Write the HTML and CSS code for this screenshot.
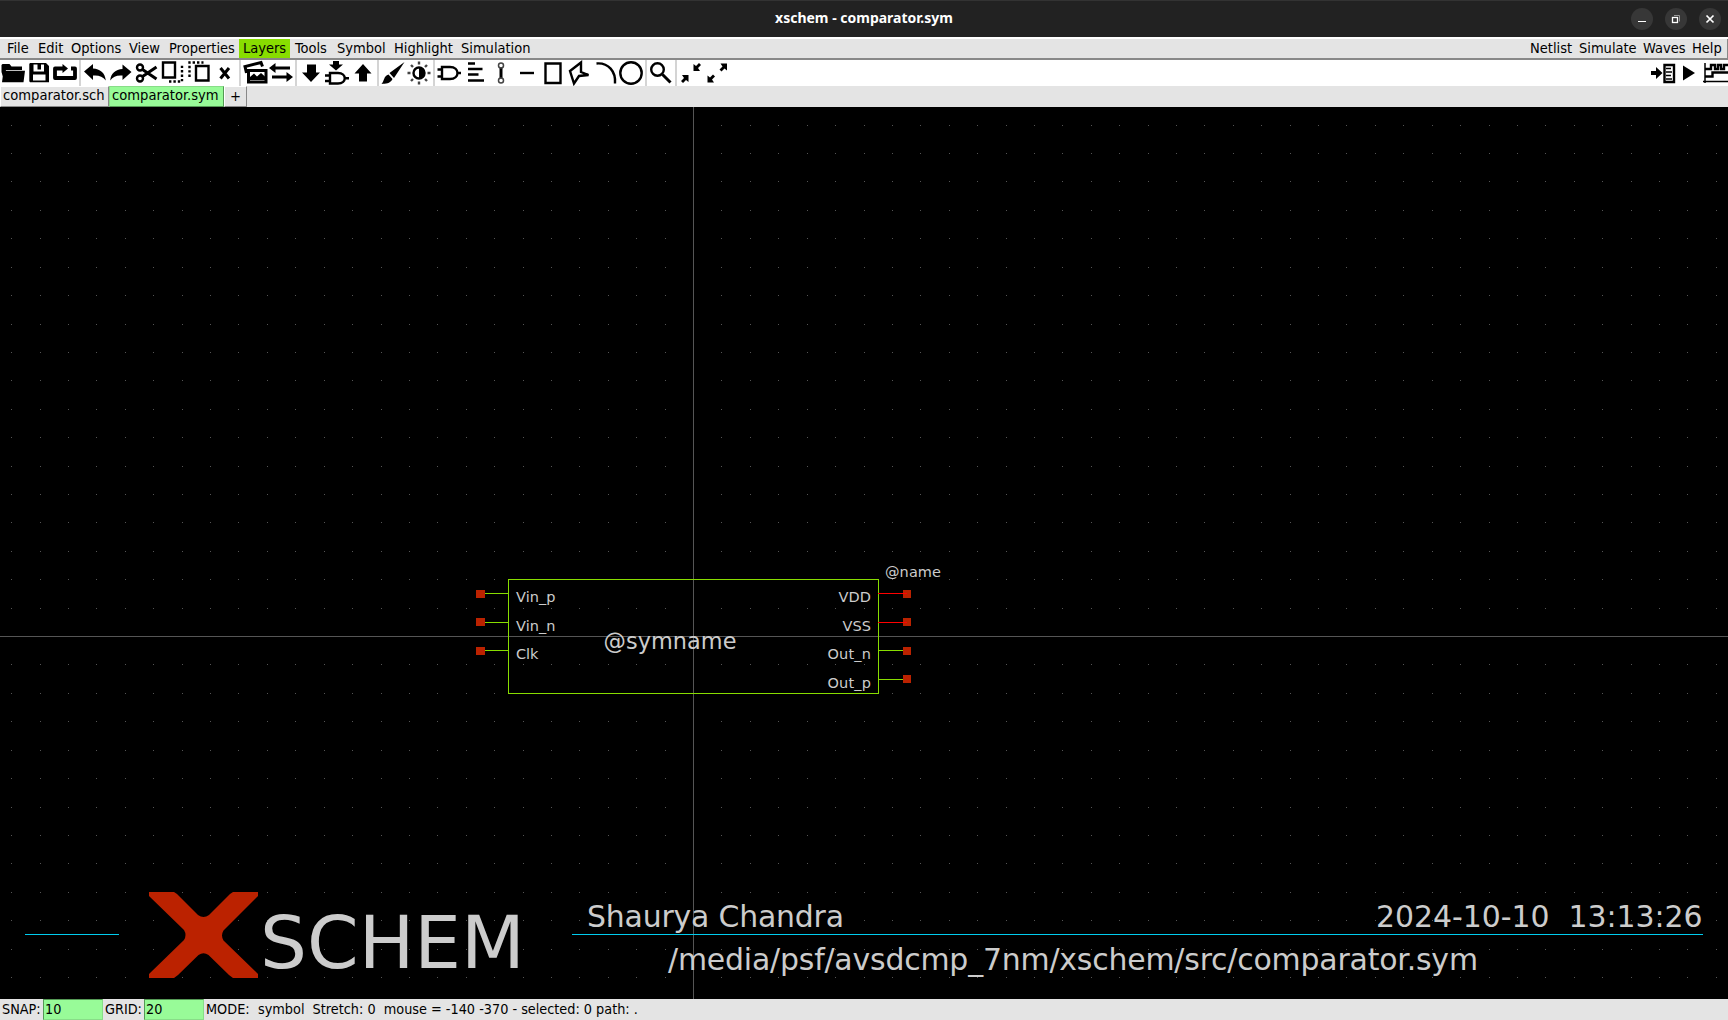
FILE: index.html
```html
<!DOCTYPE html>
<html lang="en">
<head>
<meta charset="utf-8">
<title>xschem - comparator.sym</title>
<link rel="stylesheet" href="styles.css">
</head>
<body>
<div class="window">
  <header class="titlebar">
    <div class="title">xschem - comparator.sym</div>
    <div class="controls">
      <span class="ctl"><svg viewBox="0 0 22 22"><path d="M7 13.500h8" stroke="#fff"/></svg></span>
      <span class="ctl"><svg viewBox="0 0 22 22"><path d="M9 7.500h5.500v6" stroke="#999"/><rect x="7.500" y="9.500" width="5" height="5" stroke="#fff" stroke-width="1.300"/></svg></span>
      <span class="ctl"><svg viewBox="0 0 22 22"><path d="M7.500 7.500l7 7m0-7l-7 7" stroke="#fff" stroke-width="1.700"/></svg></span>
    </div>
  </header>
  <nav class="menubar">
    <div class="menus">
      <span class="m1">File</span><span class="m2">Edit</span><span class="m3">Options</span><span class="m4">View</span><span class="m5">Properties</span><span class="m6 active">Layers</span><span class="m7">Tools</span><span class="m8">Symbol</span><span class="m9">Highlight</span><span>Simulation</span>
    </div>
    <div class="menus right"><span class="r1">Netlist</span><span class="r2">Simulate</span><span class="r3">Waves</span><span class="r4">Help</span></div>
  </nav>
  <div class="toolbar">
    <div class="group">
      <svg width="27" height="26" viewBox="0 0 27 26"><path class="f" d="M1.500 12V5l1-1h7l2 2.500H22V10H6l-2.500 9zM3.500 10.800h21.500L23.500 22.300H2z"/></svg>
      <svg width="24" height="26" viewBox="27 0 24 26"><path class="f" fill-rule="evenodd" d="M30 3h16l3 3v16.300H30l-.7-1V4zM33.500 4.500v7h10.500v-7h-3v5h-3.500v-5zM33 14.500v6h12.500v-6z"/></svg>
      <svg width="28" height="26" viewBox="51 0 28 26"><path class="s w4 round" d="M64 8.500h-9v9.500h20V8.500h-4"/><path class="f" d="M62.500 4l5.500 4.500-5.500 4.500z"/></svg>
    </div>
    <i class="sep"></i>
    <div class="group">
      <svg width="27" height="26" viewBox="81 0 27 26"><path class="f" d="M84 11.500l9-7.500v4.500c7 .5 12 4 12.800 12-3-4-7-5.500-12.800-5v4.500z"/></svg>
      <svg width="26" height="26" viewBox="108 0 26 26"><path class="f" d="M131.500 12l-9-7.500V9c-7 .5-11.500 4-12.300 11.500 3-4 6.500-5.500 12.300-5V20z"/></svg>
      <svg width="25" height="26" viewBox="134 0 25 26"><g class="s w2"><circle cx="140" cy="7.500" r="3"/><circle cx="140" cy="18.500" r="3"/></g><path class="s w3" d="M142.500 9.500l14 9.500M142.500 16.500l14-9.500"/></svg>
      <svg width="26" height="26" viewBox="159 0 26 26"><path class="s w2" d="M163 2.500h12v15h-12z"/><path class="s w2 dot" d="M169 21.500h13V5"/></svg>
      <svg width="27" height="26" viewBox="185 0 27 26"><path class="s w2 dot" d="M189.500 17V2.500h14"/><path class="s w2" d="M196 6h12.500v14.500H196z"/></svg>
      <svg width="27" height="26" viewBox="212 0 27 26"><path class="s w3" d="M220.500 8l8.500 10.500M229 8l-8.500 10.500"/></svg>
    </div>
    <i class="sep"></i>
    <div class="group">
      <svg width="27" height="26" viewBox="241 0 27 26"><path class="s w3" d="M248.500 10.500h17.500v11.500h-17.500z"/><path class="f" d="M250 20v-3l4-3.500 3 3 4-3.500 4.500 4v3z"/><path class="s w3" d="M246.500 13l-1.500-6.500 16-4 1.500 4"/></svg>
      <svg width="27" height="26" viewBox="268 0 27 26"><path class="s w3" d="M274 8h16M272 17h16"/><path class="f" d="M269 8l6.500-5v10zM293 17l-6.500-5v10z"/></svg>
    </div>
    <i class="sep"></i>
    <div class="group">
      <svg width="26" height="26" viewBox="297 0 26 26"><path class="f" d="M307 4.500h9v8h4L311 22l-9-9.500h5z"/></svg>
      <svg width="28" height="26" viewBox="323 0 28 26"><path class="f" d="M333 1h6v3.500h4l-7 6-7-6h4z"/><path class="s w2" d="M330 13h8c9 0 9 10.500 0 10.500h-8zM325 15.500h5M325 21h5M344.500 18.200h4.500"/></svg>
      <svg width="26" height="26" viewBox="351 0 26 26"><path class="f" d="M359 21.500h8v-8h4.500L363 4l-8.500 9.500h4.500z"/></svg>
    </div>
    <i class="sep"></i>
    <div class="group">
      <svg width="27" height="26" viewBox="379 0 27 26"><path class="f" d="M404.500 2L389.500 13l4.500 5zM388.500 14.500l4 4.500c-2.500 5-7 4.500-11 5 3-3 2-8 7-9.500z"/></svg>
      <svg width="27" height="26" viewBox="406 0 27 26"><circle class="s w2" cx="419" cy="13" r="5.500"/><path class="f" d="M419 7.500a5.500 5.500 0 0 1 0 11z"/><path class="s w2 soft" d="M419 1.500v3M419 21.500v3M407.500 13h3M427.500 13h3M411 5l2 2M425 19l2 2M427 5l-2 2M413 19l-2 2"/></svg>
    </div>
    <i class="sep"></i>
    <div class="group">
      <svg width="28" height="26" viewBox="435 0 28 26"><path class="s w2" d="M442 7h8c10 0 10 12 0 12h-8zM437.500 9.500h4M437.500 16.500h4M457 13h4"/></svg>
      <svg width="27" height="26" viewBox="463 0 27 26"><path class="s w2" d="M468 3.500h7M468 9h14.500M468 14.500h10.500M468 20.500h16"/></svg>
      <svg width="26" height="26" viewBox="490 0 26 26"><path class="s w3" d="M501 7.500v11"/><g class="s thin soft"><circle cx="501" cy="5.500" r="2.500"/><circle cx="501" cy="20.500" r="2.500"/></g></svg>
      <svg width="24" height="26" viewBox="516 0 24 26"><path class="s w2" d="M520 13h14"/></svg>
      <svg width="26" height="26" viewBox="540 0 26 26"><path class="s w2" d="M545.500 3.500h15V23h-15z"/></svg>
      <svg width="27" height="26" viewBox="566 0 27 26"><path class="s w2" d="M570 11l11-8.500v9.500l7.500 3-9.500 1-5 7.500z"/></svg>
      <svg width="25" height="26" viewBox="593 0 25 26"><path class="s w2" d="M596.500 3.500c12-1 19.500 8 18.500 20"/></svg>
      <svg width="27" height="26" viewBox="618 0 27 26"><circle class="s w2" cx="631" cy="13" r="10.700"/></svg>
    </div>
    <i class="sep"></i>
    <div class="group">
      <svg width="28" height="26" viewBox="647 0 28 26"><circle class="s w2" cx="657.500" cy="9.500" r="6.300"/><path class="s w3" d="M662.500 14.500l8 8"/></svg>
    </div>
    <i class="sep"></i>
    <div class="group">
      <svg width="28" height="26" viewBox="677 0 28 26"><path class="f" d="M688.500 15v7l-2.500-2-3 3-2-2 3-3-2-3zM693.500 11V4l2.500 2 3-3 2 2-3 3 2 3z"/></svg>
      <svg width="26" height="26" viewBox="705 0 26 26"><path class="f" d="M707.500 22.500v-7l2.500 2 3-3 2 2-3 3 2 3zM727 3.500v7L724.500 8.500l-3 3-2-2 3-3-2-3z"/></svg>
    </div>
    <div class="group end">
      <svg width="28" height="26" viewBox="1650 0 28 26"><path class="f" d="M1651 11h5V7l6.500 6-6.500 6v-4h-5z"/><path class="s w2" d="M1664.500 5h9.500v17h-9.500z"/><path class="s thin" d="M1666 8.500h5M1666 12h6M1666 15.500h5M1666 19h6"/></svg>
      <svg width="25" height="26" viewBox="1678 0 25 26"><path class="f" d="M1683 5.500l12 7.500-12 7.500z"/></svg>
      <svg width="25" height="26" viewBox="1703 0 25 26"><path class="s thin" d="M1705 3v20M1703 21.500h25"/><path class="s w2" d="M1705 9h6V5h4v4h3V5h3v4h3V5h4M1705 16.500h7.500v-4H1728"/></svg>
    </div>
  </div>
  <div class="tabs"><span class="tab t1">comparator.sch</span><span class="tab t2">comparator.sym</span><span class="tab t3">+</span></div>
  <main class="canvas">
    <svg width="1728" height="892" viewBox="0 107 1728 892">
      <g id="grid" fill="#555"></g>
      <path d="M693.500 107V999M0 636.500H1728" stroke="#555" fill="none"/>
      <g fill="none" stroke="#88dd00">
        <rect x="508.500" y="579.500" width="370" height="114"/>
        <path d="M480 593.500h28M480 622.500h28M480 650.500h28M879 650.500h28M879 679.500h28"/>
      </g>
      <g fill="#bb2200">
        <path d="M476 590h9v8h-9zM476 618h9v8h-9zM476 647h9v8h-9zM903 590h8v8h-8zM903 618h8v8h-8zM903 647h8v8h-8zM903 675h8v8h-8z"/>
        <path d="M149 892h25l3 2 21 21q5.500 4 11 0l21-21 3-2h25v4l-34.500 34.500q-3 5 0 10L258 974v4h-25l-4-3-20.500-20q-5-3.500-10 0L178 975l-4 3h-25v-4l35-34q3-5 0-10L149 896z"/>
      </g>
      <path d="M878 593.500h29M878 622.500h29" stroke="#f00"/>
      <path d="M25 934.500h94M572 934.500h1131" stroke="#00ccee"/>
      <g class="label">
        <text x="516" y="602" textLength="39.500">Vin_p</text>
        <text x="516" y="631" textLength="39.500">Vin_n</text>
        <text x="516" y="659" textLength="22.500">Clk</text>
        <text x="838.500" y="602" textLength="32.500">VDD</text>
        <text x="842.500" y="631" textLength="28.500">VSS</text>
        <text x="827.500" y="659" textLength="43.500">Out_n</text>
        <text x="827.500" y="688" textLength="43.500">Out_p</text>
        <text x="885" y="577" textLength="56">@name</text>
      </g>
      <text class="symname" x="603.500" y="649" textLength="133">@symname</text>
      <text class="brand" x="260" y="968" textLength="265" lengthAdjust="spacingAndGlyphs">SCHEM</text>
      <g class="info">
        <text x="587" y="927" textLength="257">Shaurya Chandra</text>
        <text x="668" y="970" textLength="810">/media/psf/avsdcmp_7nm/xschem/src/comparator.sym</text>
        <text x="1376" y="927" textLength="326.500" xml:space="preserve">2024-10-10  13:13:26</text>
      </g>
    </svg>
  </main>
  <footer class="status"><span class="snap">SNAP:</span><span class="field">10</span><span class="gridlbl">GRID:</span><span class="field">20</span><span class="mode">MODE:</span><span class="msg">symbol  Stretch: 0  mouse = -140 -370 - selected: 0 path: .</span></footer>
</div>
<script src="grid.js"></script>
</body>
</html>
```
FILE: styles.css
```css
* { box-sizing: border-box; }
body { margin: 0; background: #000; }
.window { width: 1728px; height: 1020px; display: flex; flex-direction: column; overflow: hidden; font: 14.5px/19px "DejaVu Sans Condensed", "DejaVu Sans", sans-serif; font-stretch: condensed; color: #000; }
.titlebar { height: 37px; background: #222; border-top: 1px solid #333; display: grid; grid-template-columns: 1fr auto 1fr; align-items: center; }
.title { grid-column: 2; color: #fff; font: bold 14px/20px "Noto Sans", "Open Sans", sans-serif; padding-bottom: 2px; }
.controls { display: flex; justify-content: flex-end; gap: 12px; padding-right: 7px; }
.ctl { width: 22px; height: 22px; border-radius: 50%; background: #373737; }
.ctl svg { display: block; fill: none; }
.menubar { height: 23px; background: #e4e4e4; border-top: 2px solid #fff; border-bottom: 2px solid #888; display: flex; justify-content: space-between; padding-left: 2px; }
.menus { display: flex; white-space: nowrap; }
.menus span { padding-left: 4px; line-height: 18px; height: 19px; }
.menus .m1 { width: 32px; padding-left: 5px; }
.m2 { width: 33px; }
.m3 { width: 58px; }
.m4 { width: 40px; }
.m5 { width: 74px; }
.m6 { width: 51px; }
.menus .m7 { width: 43px; padding-left: 5px; }
.m8 { width: 57px; }
.m9 { width: 67px; }
.r1 { width: 48px; }
.menus .r2 { width: 64px; padding-left: 5px; }
.menus .r3 { width: 50px; padding-left: 5px; }
.r4 { width: 39px; }
.menus .active { background: #88dd00; }
.right { border-right: 1px solid #888; }
.toolbar { height: 26px; background: #fff; display: flex; }
.group { display: flex; }
.end { margin-left: auto; }
.sep { width: 2px; background: #d4d4d4; }
.f { fill: #000; }
.s { fill: none; stroke: #000; }
.w2 { stroke-width: 2.4; }
.w3 { stroke-width: 3; }
.w4 { stroke-width: 3.8; }
.round { stroke-linejoin: round; }
.thin { stroke-width: 1.5; }
.soft { stroke: #444; }
.dot { stroke-dasharray: 2.4 2; }
.tabs { height: 21px; background: #e4e4e4; display: flex; }
.tab { border: 1px solid #fff; border-right-color: #888; border-bottom-color: #888; padding-left: 2px; line-height: 15px; white-space: nowrap; font-size: 14.6px; }
.t1 { width: 109px; }
.t2 { width: 115px; background: #98fb98; border-color: #88dd88 #559955 #559955 #88dd88; }
.t3 { width: 23px; padding-left: 5px; line-height: 18px; }
.canvas { height: 892px; background: #000; }
.canvas svg { display: block; }
.canvas text { font-family: "DejaVu Sans", sans-serif; font-stretch: normal; fill: #ccc; }
.label text { font-size: 14.5px; }
.canvas .symname { font-size: 22.4px; }
.canvas .brand { font-size: 73.5px; }
.info text { font-size: 29.9px; }
.status { height: 21px; background: #e4e4e4; display: flex; white-space: pre; line-height: 21px; padding-left: 2px; font-size: 14.3px; }
.snap { width: 41px; }
.field { width: 60px; background: #98fb98; border: 1px solid #88dd88; border-top-color: #559955; border-left-color: #559955; padding-left: 1px; line-height: 19px; }
.gridlbl { width: 41px; padding-left: 2px; }
.mode { width: 54px; padding-left: 2px; }
```
FILE: grid.js
```js
// One dot per 20-unit grid step around the origin.
const step = 28.41, ox = 693.05, oy = 636.05;
let dots = "";
for (let j = -18; j <= 12; j++)
  for (let i = -24; i <= 36; i++)
    dots += `<rect x="${Math.round(ox + i * step)}" y="${Math.round(oy + j * step)}" width="1" height="1"/>`;
document.getElementById("grid").innerHTML = dots;
```
